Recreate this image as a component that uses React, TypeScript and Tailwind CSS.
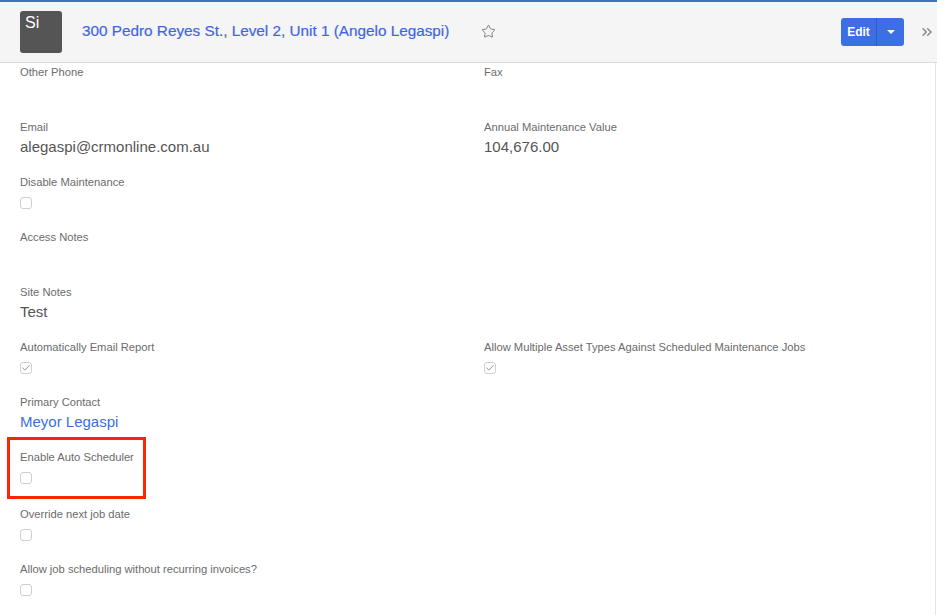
import React from 'react';
import { Star, ChevronsRight, Check } from 'lucide-react';

const FONT = 'font-["Liberation_Sans",Arial,sans-serif]';

const CheckBox = ({ checked = false }: { checked?: boolean }) => (
  <div className="mt-2 flex h-3 w-3 items-center justify-center rounded-[3px] border border-[#cfcfcf] bg-white">
    {checked && <Check size={10} strokeWidth={2} className="text-[#808080]" />}
  </div>
);

const Field = ({ label, children }: { label?: string; children?: React.ReactNode }) => (
  <div className="h-[55px] w-[464px] shrink-0 pt-[3px]">
    {label && <div className="text-[11.2px] leading-[13px] text-[#6b6b6b]">{label}</div>}
    {children}
  </div>
);

const Value = ({ children, link }: { children: React.ReactNode; link?: boolean }) => (
  <div className={`mt-[3px] text-[15px] leading-[20px] ${link ? 'text-[#3b6fe0]' : 'text-[#555555]'}`}>{children}</div>
);

export default function App() {
  return (
    <div className={`${FONT} h-[615px] w-[937px] overflow-hidden bg-white`}>
      <div className="flex h-[63px] items-center border-t-2 border-b border-t-[#3b73bd] border-b-[#dcdcdc] bg-[#f5f5f5] pl-5 pr-[2px]">
        <div className="h-[42px] w-[42px] rounded-[3px] bg-[#555555] pl-[5px] pt-[3px] text-[16px] leading-[18px] text-white">Si</div>
        <div className="ml-5 mb-[2px] text-[15.3px] text-[#3f66e0] [-webkit-text-stroke:0.2px_#3f66e0]">300 Pedro Reyes St., Level 2, Unit 1 (Angelo Legaspi)</div>
        <Star size={15} strokeWidth={1.3} className="ml-[32px] mb-[1px] text-[#666666]" />
        <div className="ml-auto flex h-7 w-[63px] rounded-[3px] bg-[#3b6fe3] text-white">
          <div className="flex w-[36px] items-center justify-center border-r border-r-[#2f5cc4] text-[12px] font-bold">Edit</div>
          <div className="flex flex-1 items-center justify-center">
            <div className="h-0 w-0 border-x-4 border-t-[4px] border-x-transparent border-t-white" />
          </div>
        </div>
        <ChevronsRight size={16} strokeWidth={2} className="ml-[15px] text-[#808080]" />
      </div>

      <div className="h-[552px] w-[936px] overflow-hidden border-r border-r-[#e6e6e6] pl-5">
        <div className="flex">
          <Field label="Other Phone" />
          <Field label="Fax" />
        </div>
        <div className="flex">
          <Field label="Email"><Value>alegaspi@crmonline.com.au</Value></Field>
          <Field label="Annual Maintenance Value"><Value>104,676.00</Value></Field>
        </div>
        <Field label="Disable Maintenance"><CheckBox /></Field>
        <Field label="Access Notes" />
        <Field label="Site Notes"><Value>Test</Value></Field>
        <div className="flex">
          <Field label="Automatically Email Report"><CheckBox checked /></Field>
          <Field label="Allow Multiple Asset Types Against Scheduled Maintenance Jobs"><CheckBox checked /></Field>
        </div>
        <Field label="Primary Contact"><Value link>Meyor Legaspi</Value></Field>
        <div className="relative h-[57px]">
          <Field label="Enable Auto Scheduler"><CheckBox /></Field>
          <div className="absolute left-[-13px] top-[-11px] h-[62px] w-[139px] border-[3px] border-[#fb2608]" />
        </div>
        <Field label="Override next job date"><CheckBox /></Field>
        <Field label="Allow job scheduling without recurring invoices?"><CheckBox /></Field>
      </div>
    </div>
  );
}
